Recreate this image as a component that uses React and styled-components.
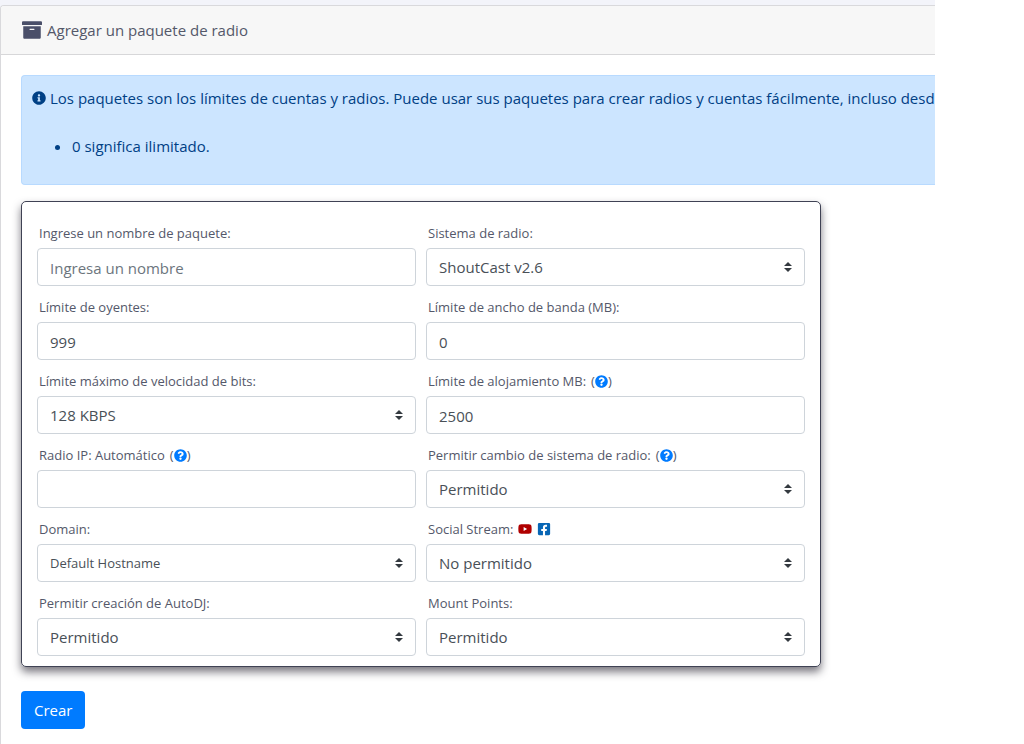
import React, { useState } from 'react';
import styled, { createGlobalStyle } from 'styled-components';
import {
  FaArchive,
  FaInfoCircle,
  FaQuestionCircle,
  FaYoutube,
  FaFacebookSquare
} from 'react-icons/fa';

const GlobalStyle = createGlobalStyle`
  *, *::before, *::after {
    box-sizing: border-box;
  }

  body {
    margin: 0;
    background: #fff;
    color: #54586a;
    font-family: 'Open Sans', 'Noto Sans', sans-serif;
    font-size: 15px;
    line-height: 24px;
  }

  button, input, select {
    font-family: inherit;
  }
`;

const Page = styled.div`
  display: flex;
  min-height: 100vh;
  margin-right: 89px;
  padding-top: 5px;
  background: #f3f4fa;
  overflow: hidden;
`;

const Card = styled.main`
  flex: 1;
  min-width: 0;
  background: #fff;
  border: 1px solid #d9d9dc;
  border-width: 1px 0 0 1px;
  border-top-left-radius: 4px;
`;

const CardHeader = styled.header`
  display: flex;
  align-items: center;
  gap: 5px;
  padding: 12px 21px;
  background: #f7f7f7;
  border-bottom: 1px solid #d7d7d9;
  border-top-left-radius: 3px;

  svg {
    color: #4a4f69;
  }
`;

const CardTitle = styled.h1`
  margin: 0;
  font-size: 15px;
  font-weight: 400;
  line-height: 24px;
`;

const CardBody = styled.div`
  padding: 20px 0 15px 20px;
`;

const Alert = styled.div`
  padding: 10px;
  margin-bottom: 16px;
  background: #cce5ff;
  border: 1px solid #b8daff;
  border-right: none;
  border-radius: 4px 0 0 4px;
  color: #004085;
  overflow: hidden;
`;

const AlertText = styled.p`
  display: flex;
  align-items: center;
  gap: 4px;
  margin: 0 0 24px;
  white-space: nowrap;

  svg {
    flex: none;
  }
`;

const AlertList = styled.ul`
  margin: 0 0 16px;
  padding-left: 40px;
`;

const FormPanel = styled.div`
  display: grid;
  grid-template-columns: 1fr 1fr;
  column-gap: 10px;
  max-width: 800px;
  padding: 10px 15px;
  margin-bottom: 24px;
  border: 1px solid #3f4254;
  border-radius: 5px;
  box-shadow: 0 5px 8px rgba(50, 48, 60, 0.65);
`;

const Field = styled.div`
  padding-top: 10px;
  min-width: 0;
`;

const FieldHeader = styled.div`
  display: flex;
  align-items: center;
  gap: 5px;
  padding: 0 2px;
  margin-bottom: 4px;
  font-size: 13px;
  line-height: 22px;
`;

const Help = styled.span`
  display: flex;
  align-items: center;
`;

const HelpLink = styled.a`
  display: flex;
  color: #007bff;
`;

const Input = styled.input`
  display: block;
  width: 100%;
  height: 38px;
  padding: 7px 12px 5px;
  border: 1px solid #ced4da;
  border-radius: 4px;
  background: #fff;
  color: #495057;
  font-size: 15px;
  line-height: 24px;

  &::placeholder {
    color: #6c757d;
    opacity: 1;
  }

  &:focus {
    outline: none;
    border-color: #80bdff;
  }
`;

const Select = styled.select`
  display: block;
  width: 100%;
  height: 38px;
  padding: 6px 28px 6px 12px;
  border: 1px solid #ced4da;
  border-radius: 4px;
  appearance: none;
  background: #fff url("data:image/svg+xml,%3Csvg xmlns='http://www.w3.org/2000/svg' width='4' height='5' viewBox='0 0 4 5'%3E%3Cpath fill='%23343a40' d='M2 0L0 2h4zm0 5L0 3h4z'/%3E%3C/svg%3E") no-repeat right 12px center / 8px 10px;
  color: #495057;
  font-size: ${props => props.$small ? '13px' : '15px'};
  line-height: 24px;

  &:focus {
    outline: none;
    border-color: #80bdff;
  }
`;

const SubmitButton = styled.button`
  display: block;
  height: 38px;
  padding: 0 13px;
  border: none;
  border-radius: 4px;
  background: #007bff;
  color: #fff;
  font-size: 15px;
  line-height: 24px;
  cursor: pointer;

  &:hover {
    background: #0069d9;
  }
`;

const fields = [
  { name: 'nombre', label: 'Ingrese un nombre de paquete:', placeholder: 'Ingresa un nombre' },
  { name: 'sistema', label: 'Sistema de radio:', options: ['ShoutCast v2.6'] },
  { name: 'oyentes', label: 'Límite de oyentes:' },
  { name: 'banda', label: 'Límite de ancho de banda (MB):' },
  { name: 'bits', label: 'Límite máximo de velocidad de bits:', options: ['128 KBPS'] },
  { name: 'alojamiento', label: 'Límite de alojamiento MB:', help: true },
  { name: 'ip', label: 'Radio IP: Automático', help: true },
  { name: 'cambio', label: 'Permitir cambio de sistema de radio:', help: true, options: ['Permitido', 'No permitido'] },
  { name: 'domain', label: 'Domain:', options: ['Default Hostname'], small: true },
  { name: 'social', label: 'Social Stream:', social: true, options: ['No permitido', 'Permitido'] },
  { name: 'autodj', label: 'Permitir creación de AutoDJ:', options: ['Permitido', 'No permitido'] },
  { name: 'mount', label: 'Mount Points:', options: ['Permitido', 'No permitido'] }
];

const App = () => {
  const [formData, setFormData] = useState({
    nombre: '',
    sistema: 'ShoutCast v2.6',
    oyentes: '999',
    banda: '0',
    bits: '128 KBPS',
    alojamiento: '2500',
    ip: '',
    cambio: 'Permitido',
    domain: 'Default Hostname',
    social: 'No permitido',
    autodj: 'Permitido',
    mount: 'Permitido'
  });

  const handleChange = (e) => {
    const { name, value } = e.target;
    setFormData(prev => ({ ...prev, [name]: value }));
  };

  const handleSubmit = (e) => {
    e.preventDefault();
  };

  return (
    <>
      <GlobalStyle />
      <Page>
        <Card>
          <CardHeader>
            <FaArchive size={20} />
            <CardTitle>Agregar un paquete de radio</CardTitle>
          </CardHeader>

          <CardBody>
            <Alert>
              <AlertText>
                <FaInfoCircle size={14} />
                Los paquetes son los límites de cuentas y radios. Puede usar sus paquetes para crear radios y cuentas fácilmente, incluso desd
              </AlertText>
              <AlertList>
                <li>0 significa ilimitado.</li>
              </AlertList>
            </Alert>

            <form onSubmit={handleSubmit}>
              <FormPanel>
                {fields.map(field => (
                  <Field key={field.name}>
                    <FieldHeader>
                      <label htmlFor={field.name}>{field.label}</label>
                      {field.help && (
                        <Help>
                          (<HelpLink href="#" aria-label="Ayuda"><FaQuestionCircle size={13} /></HelpLink>)
                        </Help>
                      )}
                      {field.social && (
                        <>
                          <FaYoutube size={14} color="#b00000" />
                          <FaFacebookSquare size={14} color="#0866b5" />
                        </>
                      )}
                    </FieldHeader>
                    {field.options ? (
                      <Select
                        id={field.name}
                        name={field.name}
                        value={formData[field.name]}
                        onChange={handleChange}
                        $small={field.small}
                      >
                        {field.options.map(option => (
                          <option key={option} value={option}>{option}</option>
                        ))}
                      </Select>
                    ) : (
                      <Input
                        type="text"
                        id={field.name}
                        name={field.name}
                        value={formData[field.name]}
                        onChange={handleChange}
                        placeholder={field.placeholder}
                      />
                    )}
                  </Field>
                ))}
              </FormPanel>

              <SubmitButton type="submit">Crear</SubmitButton>
            </form>
          </CardBody>
        </Card>
      </Page>
    </>
  );
};

export default App;
